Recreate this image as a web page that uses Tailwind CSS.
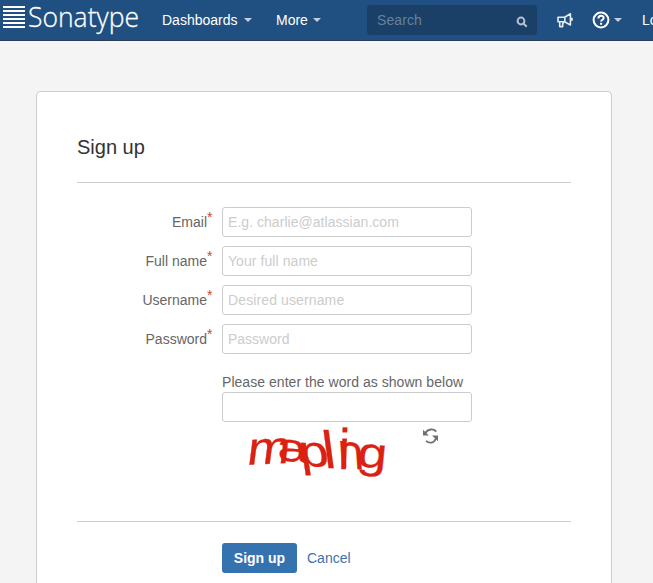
<!DOCTYPE html>
<html lang="en">
<head>
<meta charset="utf-8">
<title>Sign up</title>
<script src="https://cdn.jsdelivr.net/npm/@tailwindcss/browser@4"></script>
</head>
<body class="h-[583px] w-[653px] overflow-hidden bg-[#f4f4f4] font-['Liberation_Sans',Arial,sans-serif] text-[14px] leading-5 text-[#666]">
<header class="flex h-[41px] w-[653px] items-center overflow-hidden whitespace-nowrap border-b border-[#2e3d54] bg-[#205081] text-white">
  <svg class="h-10 w-[162px] shrink-0 overflow-visible" viewBox="0 0 162 40" role="img" aria-label="Sonatype">
    <path d="M3 7h22M3 11h22M3 15h22M3 19h22M3 23h22M3 27h22" stroke="#fff" stroke-width="2"/>
    <text x="28" y="27.3" font-family="Open Sans, sans-serif" font-weight="300" font-size="28" fill="#fff" stroke="#fff" stroke-width=".3" textLength="111" lengthAdjust="spacingAndGlyphs">Sonatype</text>
  </svg>
  <a class="flex w-[114px] shrink-0 items-center gap-[6px]">Dashboards <i class="border-x-4 border-t-4 border-x-transparent border-t-[#c3cfdc]"></i></a>
  <a class="flex w-[91px] shrink-0 items-center gap-[5px]">More <i class="border-x-4 border-t-4 border-x-transparent border-t-[#c3cfdc]"></i></a>
  <div class="flex h-[30px] w-[170px] shrink-0 items-center justify-between rounded-[3px] bg-[#1a4067] pl-[10px] pr-[9px] tracking-[.1px] text-[#66809b]">Search
    <svg class="mt-[3px] h-3 w-3" viewBox="0 0 12 12" fill="none" stroke="#b4c1cf" stroke-width="2"><circle cx="5" cy="5" r="3.4"/><path d="M7.5 7.5l3.2 3.2"/></svg>
  </div>
  <svg class="ml-5 h-4 w-4 shrink-0" viewBox="0 0 16 16" fill="none" stroke="#e6ebf1" stroke-width="1.6" stroke-linejoin="round"><path d="M1 5.2H7.6L13.4 1.8V13L7.6 9.8H1ZM7.8 5.4V9.6M2.7 9.8V14.6H5.7V11.8L7 10M15 5.8V8.8"/></svg>
  <svg class="ml-[19px] h-[18px] w-[18px] shrink-0" viewBox="0 0 18 18" fill="none" stroke="#fff" stroke-width="2"><circle cx="9" cy="9" r="7.4"/><path d="M6.4 7.4C6.4 3.9 11.7 4 11.7 7C11.7 8.7 9.1 8.8 9.1 10.6M9.1 11.8v2"/></svg>
  <i class="ml-1 shrink-0 border-x-4 border-t-4 border-x-transparent border-t-[#c3cfdc]"></i>
  <a class="ml-5 shrink-0">Log In</a>
</header>

<main class="ml-9 mt-[50px] h-[492px] w-[576px] rounded-t-[5px] border border-b-0 border-[#ccc] bg-white px-10 pt-[40px]">
  <h1 class="h-[51px] border-b border-[#ccc] text-[20px] leading-[30px] text-[#333]">Sign up</h1>
  <form class="pt-6">
    <div class="space-y-[9px]">
      <div class="flex h-[30px]">
        <label class="relative w-[130px] pt-[5px] text-right">Email<span class="absolute left-[130px] top-0 text-[#d04437]">*</span></label>
        <input class="ml-[15px] h-[30px] w-[250px] rounded-[3px] border border-[#ccc] bg-white px-[5px] tracking-[.04px] placeholder:text-[#ccc]" placeholder="E.g. charlie@atlassian.com">
      </div>
      <div class="flex h-[30px]">
        <label class="relative w-[130px] pt-[5px] text-right">Full name<span class="absolute left-[130px] top-0 text-[#d04437]">*</span></label>
        <input class="ml-[15px] h-[30px] w-[250px] rounded-[3px] border border-[#ccc] bg-white px-[5px] tracking-[.07px] placeholder:text-[#ccc]" placeholder="Your full name">
      </div>
      <div class="flex h-[30px]">
        <label class="relative w-[130px] pt-[5px] text-right">Username<span class="absolute left-[130px] top-0 text-[#d04437]">*</span></label>
        <input class="ml-[15px] h-[30px] w-[250px] rounded-[3px] border border-[#ccc] bg-white px-[5px] tracking-[.12px] placeholder:text-[#ccc]" placeholder="Desired username">
      </div>
      <div class="flex h-[30px]">
        <label class="relative w-[130px] pt-[5px] text-right">Password<span class="absolute left-[130px] top-0 text-[#d04437]">*</span></label>
        <input type="password" class="ml-[15px] h-[30px] w-[250px] rounded-[3px] border border-[#ccc] bg-white px-[5px] placeholder:text-[#ccc]" placeholder="Password">
      </div>
    </div>
    <div class="ml-[145px] mt-[18px] h-[149px]">
      <label class="block h-5 tracking-[.04px]">Please enter the word as shown below</label>
      <input class="block h-[30px] w-[250px] rounded-[3px] border border-[#ccc] bg-white px-[5px]">
      <div class="flex pt-[5px]">
        <svg class="h-[60px] w-[200px]" viewBox="222 427 200 60" font-family="Liberation Sans, Arial, sans-serif" fill="#db2112" stroke="#db2112" stroke-width=".3">
          <text transform="matrix(1.22 -.06 -.14 1.12 246 465)" font-size="42">m</text>
          <text transform="matrix(1.4 .14 .1 1 278 460)" font-size="40">a</text>
          <text transform="matrix(1.32 .04 .16 1.1 301 466)" font-size="40">p</text>
          <text transform="matrix(1.1 0 .14 1.05 325 468)" font-size="50">l</text>
          <text transform="matrix(1 0 -.04 1.15 338 469)" font-size="50">i</text>
          <text transform="matrix(1.1 .18 .08 1.15 339 466)" font-size="42">n</text>
          <text transform="matrix(1.26 .1 -.1 1.02 356.5 466.5)" font-size="42">g</text>
        </svg>
        <svg class="mt-px h-4 w-[18px]" viewBox="422 428 18 16" fill="none" stroke="#707070" stroke-width="1.8"><path d="M425 433.5C428 428.4 433.5 428.6 436.3 431.6M436 438.2C434 443.7 429 443.6 426 440.8"/><path d="M423 429.7v5.8h5.8zM438 435.5v5.8l-6-5.8z" fill="#707070" stroke="none"/></svg>
      </div>
    </div>
    <div class="flex items-center border-t border-[#ccc] pl-[145px] pt-[21px]">
      <button type="button" class="h-[30px] w-[75px] rounded-[3px] bg-[#3572b0] font-bold text-white">Sign up</button>
      <a class="ml-[10px] text-[#3b73af]">Cancel</a>
    </div>
  </form>
</main>
</body>
</html>
